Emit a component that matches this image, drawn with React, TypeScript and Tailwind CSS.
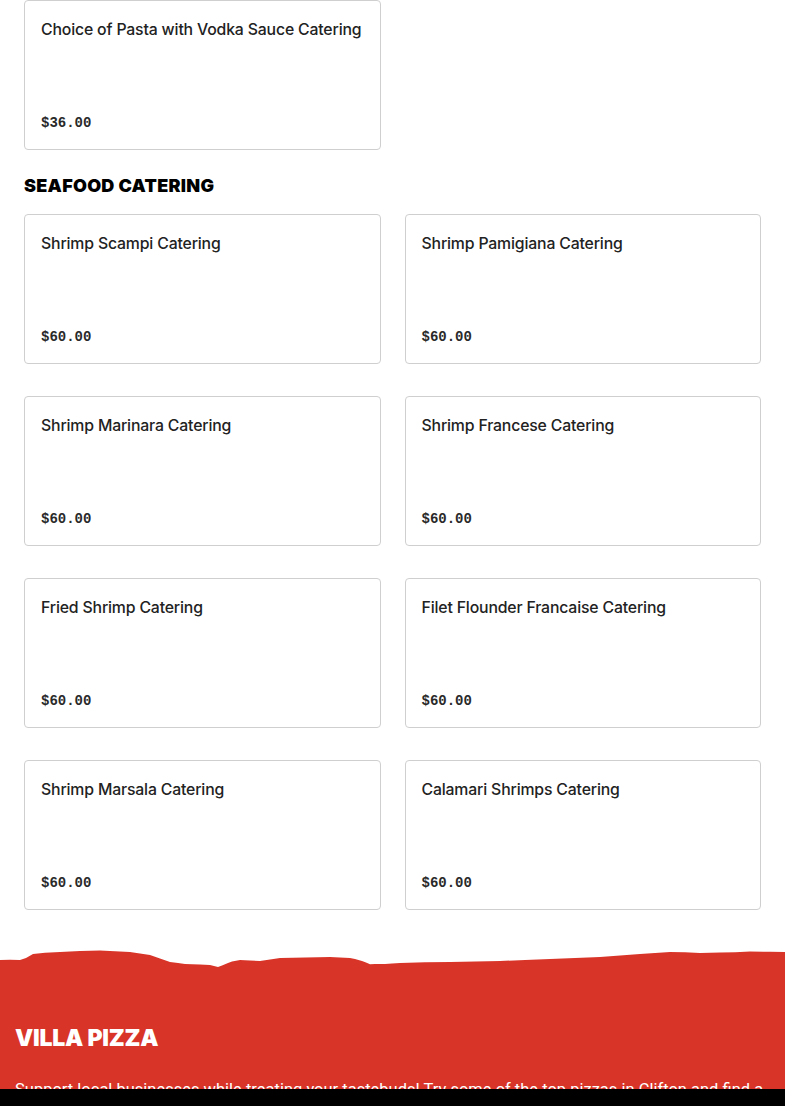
import React from "react";

const seafood = [
  ["Shrimp Scampi Catering", "$60.00"],
  ["Shrimp Pamigiana Catering", "$60.00"],
  ["Shrimp Marinara Catering", "$60.00"],
  ["Shrimp Francese Catering", "$60.00"],
  ["Fried Shrimp Catering", "$60.00"],
  ["Filet Flounder Francaise Catering", "$60.00"],
  ["Shrimp Marsala Catering", "$60.00"],
  ["Calamari Shrimps Catering", "$60.00"],
];

function Card({ title, price }: { title: string; price: string }) {
  return (
    <div className="flex h-[150px] flex-col justify-between rounded-[4px] border border-[#cfcfcf] bg-white px-4 pt-[17px] pb-4">
      <div className="whitespace-nowrap text-[15.8px] leading-6 font-medium text-[#222] [font-family:Inter,'Noto_Sans',sans-serif] tracking-[-0.01em]">
        {title}
      </div>
      <div className="text-[14px] leading-5 font-bold text-[#2a2a2a] [font-family:'Liberation_Mono',monospace]">
        {price}
      </div>
    </div>
  );
}

export default function App() {
  return (
    <div className="min-h-[1106px] bg-white">
      <div className="px-6">
        <div className="grid grid-cols-2 gap-x-6">
          <Card title="Choice of Pasta with Vodka Sauce Catering" price="$36.00" />
        </div>
        <h2 className="mt-[22px] mb-[14px] h-[28px] text-[18px] leading-7 font-black uppercase text-black [font-family:Inter,sans-serif] tracking-[0.015em]">
          Seafood Catering
        </h2>
        <div className="grid grid-cols-2 gap-x-6 gap-y-8">
          {seafood.map(([t, p]) => (
            <Card key={t} title={t} price={p} />
          ))}
        </div>
      </div>
      <div className="mt-[37px] bg-[#d93428]">
        <svg viewBox="0 0 785 22" preserveAspectRatio="none" className="block h-[22px] w-full">
          <path
            fill="#ffffff"
            d="M0 0 H785 V5 L770 4.8 L750 4.5 L735 5.2 L720 5.6 L700 6 L685 5.2 L670 5 L655 6 L640 7 L620 8.6 L600 10 L575 11 L550 12 L525 13 L500 14 L475 14.4 L450 15 L425 15.3 L400 16 L392 16.6 L385 17 L375 17 L370 17.2 L366 15.5 L362 14 L355 12 L350 11 L340 10.4 L330 10 L305 10.5 L280 11 L270 12.6 L260 14 L250 13.4 L240 13 L232 14.6 L228 16 L222 18.4 L218 20 L214 19 L210 18 L200 17.6 L185 17 L178 16 L170 15 L160 11.5 L150 8 L140 6.5 L130 5 L115 4.2 L100 3.5 L80 4 L60 5 L45 5.8 L33 7 L26 11 L20 13 L10 12.8 L0 13 Z"
          />
        </svg>
        <div className="px-[15px] pt-[53px] pb-[40px]">
          <div className="text-[23px] leading-8 font-black uppercase text-white [font-family:Inter,sans-serif] tracking-[-0.01em]">
            Villa Pizza
          </div>
          <p className="mt-[24px] text-[16.5px] leading-6 text-white [font-family:Roboto,sans-serif]">
            Support local businesses while treating your tastebuds! Try some of the top pizzas in Clifton and find a new favorite spot for your next meal.
          </p>
        </div>
      </div>
      <div className="fixed bottom-0 left-0 right-0 h-[17px] bg-black" />
    </div>
  );
}
